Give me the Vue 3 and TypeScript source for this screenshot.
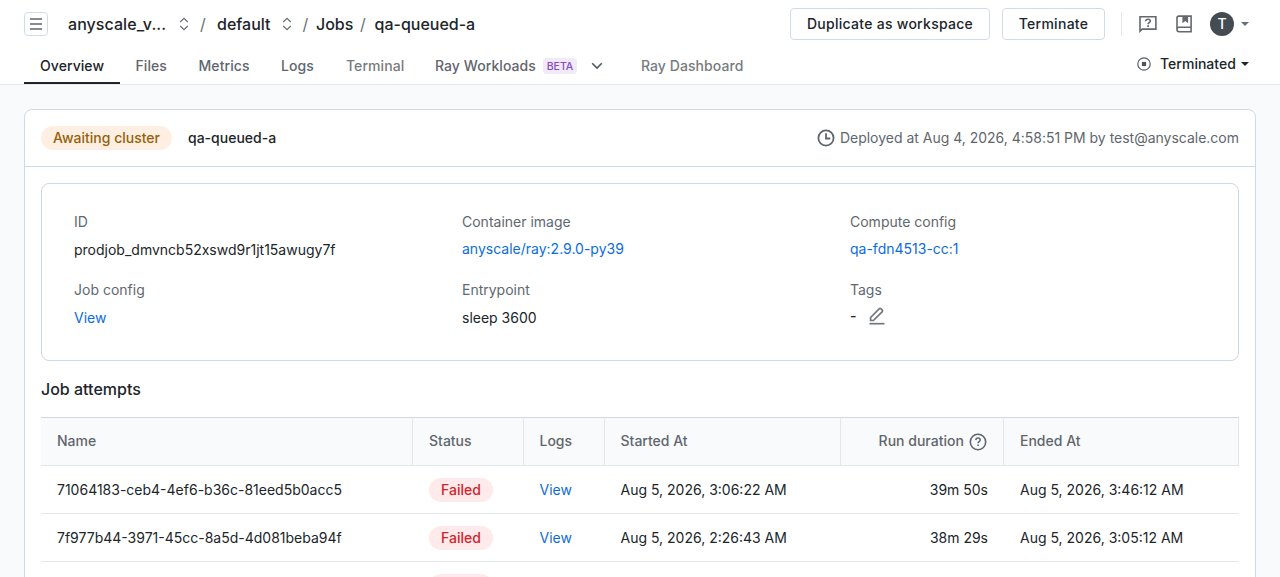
<script setup lang="ts">
interface Attempt {
  name: string
  started: string
  duration: string
  ended: string
}

const attempts: Attempt[] = [
  { name: '71064183-ceb4-4ef6-b36c-81eed5b0acc5', started: 'Aug 5, 2026, 3:06:22 AM', duration: '39m 50s', ended: 'Aug 5, 2026, 3:46:12 AM' },
  { name: '7f977b44-3971-45cc-8a5d-4d081beba94f', started: 'Aug 5, 2026, 2:26:43 AM', duration: '38m 29s', ended: 'Aug 5, 2026, 3:05:12 AM' },
  { name: '', started: '', duration: '', ended: '' },
]
</script>

<template>
  <div class="page">
    <header class="header">
      <div class="topbar">
        <button class="menu" aria-label="Menu">
          <svg width="12" height="12" viewBox="0 0 12 12"><path d="M0 1h12M0 6h12M0 11h12" stroke="#5f666d" stroke-width="1.3" /></svg>
        </button>
        <nav class="crumbs">
          <span class="crumb cloud">anyscale_v...</span>
          <svg class="sort s1" width="10" height="14" viewBox="0 0 10 14"><path d="M1.2 5 5 1.4 8.8 5M1.2 9 5 12.6 8.8 9" /></svg>
          <span class="slash sl1">/</span>
          <span class="crumb project">default</span>
          <svg class="sort s2" width="10" height="14" viewBox="0 0 10 14"><path d="M1.2 5 5 1.4 8.8 5M1.2 9 5 12.6 8.8 9" /></svg>
          <span class="slash sl2">/</span>
          <span class="crumb jobs">Jobs</span>
          <span class="slash sl3">/</span>
          <span class="crumb">qa-queued-a</span>
        </nav>
        <div class="actions">
          <button class="btn dup">Duplicate as workspace</button>
          <button class="btn term">Terminate</button>
          <span class="divider"></span>
          <svg class="help" width="18" height="18" viewBox="0 0 18 18" fill="none" stroke="#62696f" stroke-width="1.6">
            <path d="M1 16.2V1.8h15.9v12.3H3.2z" stroke-linejoin="miter" />
            <path d="M6.7 6.2c.1-1.3 1-2 2.3-2s2.3.8 2.3 1.9c0 1.5-2.2 1.7-2.2 3.2" stroke-width="1.6" />
            <path d="M9.1 10.2v1.8" stroke-width="1.8" />
          </svg>
          <svg class="book" width="16" height="18" viewBox="0 0 16 18" fill="none" stroke="#62696f" stroke-width="1.6">
            <path d="M15.1 12.4V1.1H3Q1 1.1 1 3.1v11.5Q1 16.8 3 16.8h12.1v-1.6M1 14.2q0-2 2-2h12.1v3" />
            <path d="M6.4 1.2h5.7v7L9.25 6 6.4 8.2z" fill="#62696f" stroke="none" />
          </svg>
          <span class="avatar">T</span>
          <span class="caret light"></span>
        </div>
      </div>
      <div class="tabbar">
        <a class="tab active">Overview</a>
        <a class="tab t-files">Files</a>
        <a class="tab t-metrics">Metrics</a>
        <a class="tab t-logs">Logs</a>
        <a class="tab t-terminal muted">Terminal</a>
        <a class="tab t-ray">Ray Workloads</a>
        <span class="beta">BETA</span>
        <svg class="chev" width="12" height="8" viewBox="0 0 12 8"><path d="m1.2 1.2 4.8 4.8 4.8-4.8" fill="none" stroke="#53595f" stroke-width="1.6" /></svg>
        <a class="tab t-dash muted">Ray Dashboard</a>
        <div class="state">
          <svg width="14" height="14" viewBox="0 0 14 14"><circle cx="7" cy="7" r="6.2" fill="none" stroke="#5b6268" stroke-width="1.2" /><rect x="4.9" y="4.9" width="4.2" height="4.2" fill="#4d545a" /></svg>
          <span class="state-text">Terminated</span>
          <span class="caret"></span>
        </div>
      </div>
    </header>

    <main class="card">
      <div class="card-head">
        <span class="pill waiting">Awaiting cluster</span>
        <span class="job-name">qa-queued-a</span>
        <div class="deployed">
          <svg width="18" height="18" viewBox="0 0 18 18" fill="none" stroke="#5f666d" stroke-width="1.8"><circle cx="9" cy="9" r="7.6" /><path d="M9 4.2V9.5h4.3" /></svg>
          <span>Deployed at Aug 4, 2026, 4:58:51 PM by test@anyscale.com</span>
        </div>
      </div>
      <div class="card-body">
        <section class="details">
          <div class="field"><label>ID</label><p>prodjob_dmvncb52xswd9r1jt15awugy7f</p></div>
          <div class="field up"><label>Container image</label><p><a class="link">anyscale/ray:2.9.0-py39</a></p></div>
          <div class="field up"><label>Compute config</label><p><a class="link">qa-fdn4513-cc:1</a></p></div>
          <div class="field"><label>Job config</label><p><a class="link">View</a></p></div>
          <div class="field"><label>Entrypoint</label><p>sleep 3600</p></div>
          <div class="field tags">
            <label>Tags</label>
            <p>
              <span>-</span>
              <svg width="16" height="18" viewBox="0 0 16 18" fill="none" stroke="#73787d" stroke-width="1.7">
                <path d="M.5 16.7h15" />
                <path d="M1.6 13.5v-3l8.8-8.8q.7-.7 1.4 0l1.5 1.5q.7.7 0 1.4l-8.9 8.9z" />
              </svg>
            </p>
          </div>
        </section>
        <h2>Job attempts</h2>
        <table>
          <colgroup><col class="c1" /><col class="c2" /><col class="c3" /><col class="c4" /><col class="c5" /><col class="c6" /></colgroup>
          <thead>
            <tr>
              <th>Name</th>
              <th>Status</th>
              <th>Logs</th>
              <th>Started At</th>
              <th>
                <div class="dur">
                  <span>Run duration</span>
                  <svg width="18" height="18" viewBox="0 0 18 18" fill="none" stroke="#5f666d" stroke-width="1.6">
                    <circle cx="9" cy="9" r="7.7" />
                    <path d="M6.8 7.1C6.9 5.8 7.8 5.1 9 5.1s2.2.8 2.2 1.9c0 1.5-2.1 1.7-2.1 3.2" stroke-width="1.5" /><path d="M9.1 11.4v1.6" />
                  </svg>
                </div>
              </th>
              <th>Ended At</th>
            </tr>
          </thead>
          <tbody>
            <tr v-for="(a, i) in attempts" :key="i">
              <td>{{ a.name }}</td>
              <td><span class="pill failed"><template v-if="a.name">Failed</template></span></td>
              <td><a v-if="a.name" class="link">View</a></td>
              <td>{{ a.started }}</td>
              <td class="right">{{ a.duration }}</td>
              <td>{{ a.ended }}</td>
            </tr>
          </tbody>
        </table>
      </div>
    </main>
  </div>
</template>

<style>
html,
body {
  margin: 0;
  overflow: hidden;
}
</style>

<style scoped>
.page {
  height: 577px;
  overflow: hidden;
  background: #f9fafc;
  font-family: Inter, 'Liberation Sans', sans-serif;
  font-size: 14px;
  line-height: 20px;
  color: #20252a;
}
.page * {
  box-sizing: border-box;
}
svg {
  display: block;
  flex: none;
}
.header {
  height: 85px;
  background: #fff;
  border-bottom: 1px solid #e1e8ef;
}
.topbar {
  display: flex;
  align-items: center;
  height: 48px;
  padding: 0 31px 0 24px;
}
.menu {
  display: flex;
  align-items: center;
  justify-content: center;
  width: 24px;
  height: 24px;
  padding: 0;
  border: 1px solid #cfdce8;
  border-radius: 4px;
  background: #fff;
}
.crumbs {
  display: flex;
  align-items: center;
  margin-left: 20px;
  font-size: 16px;
  font-weight: 500;
  line-height: 24px;
  white-space: nowrap;
}
.cloud {
  width: 99px;
  letter-spacing: 0.06px;
}
.project { width: 54px; }
.jobs { width: 38px; }
.sort {
  fill: none;
  stroke: #6a7076;
  stroke-width: 1.3;
}
.s1 { margin-left: 12px; }
.s2 { margin-left: 11px; }
.slash {
  width: 5px;
  font-weight: 400;
  color: #6a7076;
}
.sl1 { margin: 0 12px 0 11px; }
.sl2 { margin: 0 8.5px 0 10.5px; }
.sl3 { margin: 0 9.5px 0 6px; }
.actions {
  display: flex;
  align-items: center;
  margin-left: auto;
}
.btn {
  height: 32px;
  padding: 0;
  border: 1px solid #cfdce8;
  border-radius: 4px;
  background: #fff;
  color: #20252a;
  font: 500 14px/20px Inter, sans-serif;
  letter-spacing: 0.28px;
}
.dup { width: 200px; }
.term {
  width: 103px;
  margin-left: 12px;
}
.divider {
  width: 1px;
  height: 24px;
  margin: 0 17px 0 16px;
  background: #e3e7eb;
}
.book { margin-left: 19px; }
.avatar {
  width: 24px;
  height: 24px;
  margin-left: 18px;
  border-radius: 50%;
  background: #454c51;
  color: #fff;
  font-weight: 500;
  line-height: 24px;
  text-align: center;
}
.caret {
  width: 8px;
  height: 4px;
  background: #20252a;
  clip-path: polygon(0 0, 100% 0, 50% 100%);
}
.light {
  margin-left: 7px;
  background: #6a7076;
}
.tabbar {
  display: flex;
  align-items: center;
  height: 36px;
  padding: 0 31px 0 24px;
  white-space: nowrap;
}
.tab {
  height: 36px;
  color: #5f666d;
  font-weight: 500;
  line-height: 36px;
  letter-spacing: 0.07px;
}
.active {
  width: 96px;
  padding-left: 16px;
  border-bottom: 2px solid #20252a;
  color: #20252a;
}
.t-files { width: 63px; margin-left: 15.5px; }
.t-metrics { width: 82.5px; }
.t-logs { width: 65px; }
.t-terminal { width: 89px; }
.t-ray { width: 108px; }
.muted {
  color: #777b80;
  font-weight: 450;
}
.beta {
  width: 34px;
  height: 16px;
  border-radius: 4px;
  background: #f1eaf9;
  color: #8a4bc4;
  font-size: 10.5px;
  font-weight: 500;
  line-height: 17px;
  text-align: center;
}
.chev { margin: 0 38px 0 14px; }
.state {
  display: flex;
  align-items: center;
  height: 32px;
  margin: 0 0 4px auto;
}
.state-text {
  width: 74px;
  margin: 0 7px 0 9.5px;
  font-weight: 450;
  letter-spacing: 0.02px;
}
.card {
  height: 600px;
  margin: 24px 24px 0;
  border: 1px solid #cfdae5;
  border-radius: 8px;
  background: #fff;
}
.card-head {
  display: flex;
  align-items: center;
  height: 57px;
  padding: 0 16px;
  border-bottom: 1px solid #cfdae5;
}
.pill {
  display: block;
  height: 24px;
  border-radius: 12px;
  font-weight: 500;
  line-height: 24px;
  text-align: center;
}
.waiting {
  width: 131px;
  background: #feefe2;
  color: #956107;
}
.job-name {
  margin-left: 16px;
  font-weight: 500;
}
.deployed {
  display: flex;
  align-items: center;
  gap: 5px;
  margin-left: auto;
  color: #5f666d;
  letter-spacing: -0.01px;
}
.card-body {
  padding: 16px;
}
.details {
  display: grid;
  grid-template-columns: repeat(3, 388px);
  grid-auto-rows: 68px;
  height: 178px;
  padding: 28px 32px 0;
  border: 1px solid #cfdae5;
  border-radius: 8px;
}
.field label {
  display: block;
  color: #62686e;
}
.field p {
  margin: 8px 0 0;
}
.up p {
  margin-top: 7px;
}
.field.tags p {
  display: flex;
  align-items: center;
  gap: 12px;
  margin-top: 6px;
}
.tags p span {
  width: 7px;
  font-weight: 500;
}
.link {
  color: #0c6cde;
}
h2 {
  margin: 16px 0 16px;
  font-size: 16px;
  font-weight: 500;
  line-height: 24px;
}
table {
  width: 1198px;
  table-layout: fixed;
  border-collapse: separate;
  border-spacing: 0;
}
.c1 { width: 372px; }
.c2 { width: 111px; }
.c3 { width: 81px; }
.c4 { width: 236px; }
.c5 { width: 163px; }
.c6 { width: 235px; }
th {
  height: 49px;
  padding: 0 15.5px 1px 15.5px;
  border: solid #e2e7ec;
  border-width: 1px 1px 1px 0;
  border-top-color: #cfd8e1;
  background: #f9fafc;
  color: #5f666d;
  font-weight: 500;
  text-align: left;
}
td {
  height: 48px;
  padding: 0 16px 0 15.5px;
  border-bottom: 1px solid #e6e9ec;
  white-space: nowrap;
}
th:first-child,
td:first-child,
th:nth-child(2),
td:nth-child(2),
th:last-child,
td:last-child {
  padding-left: 16px;
}
.right {
  text-align: right;
}
.dur {
  display: flex;
  align-items: center;
  justify-content: flex-end;
  gap: 5px;
  margin-right: 0.7px;
  white-space: nowrap;
}
.dur svg {
  margin: 1px 0 -1px;
}
.failed {
  width: 64px;
  background: #feeaea;
  color: #d3222e;
}
</style>
